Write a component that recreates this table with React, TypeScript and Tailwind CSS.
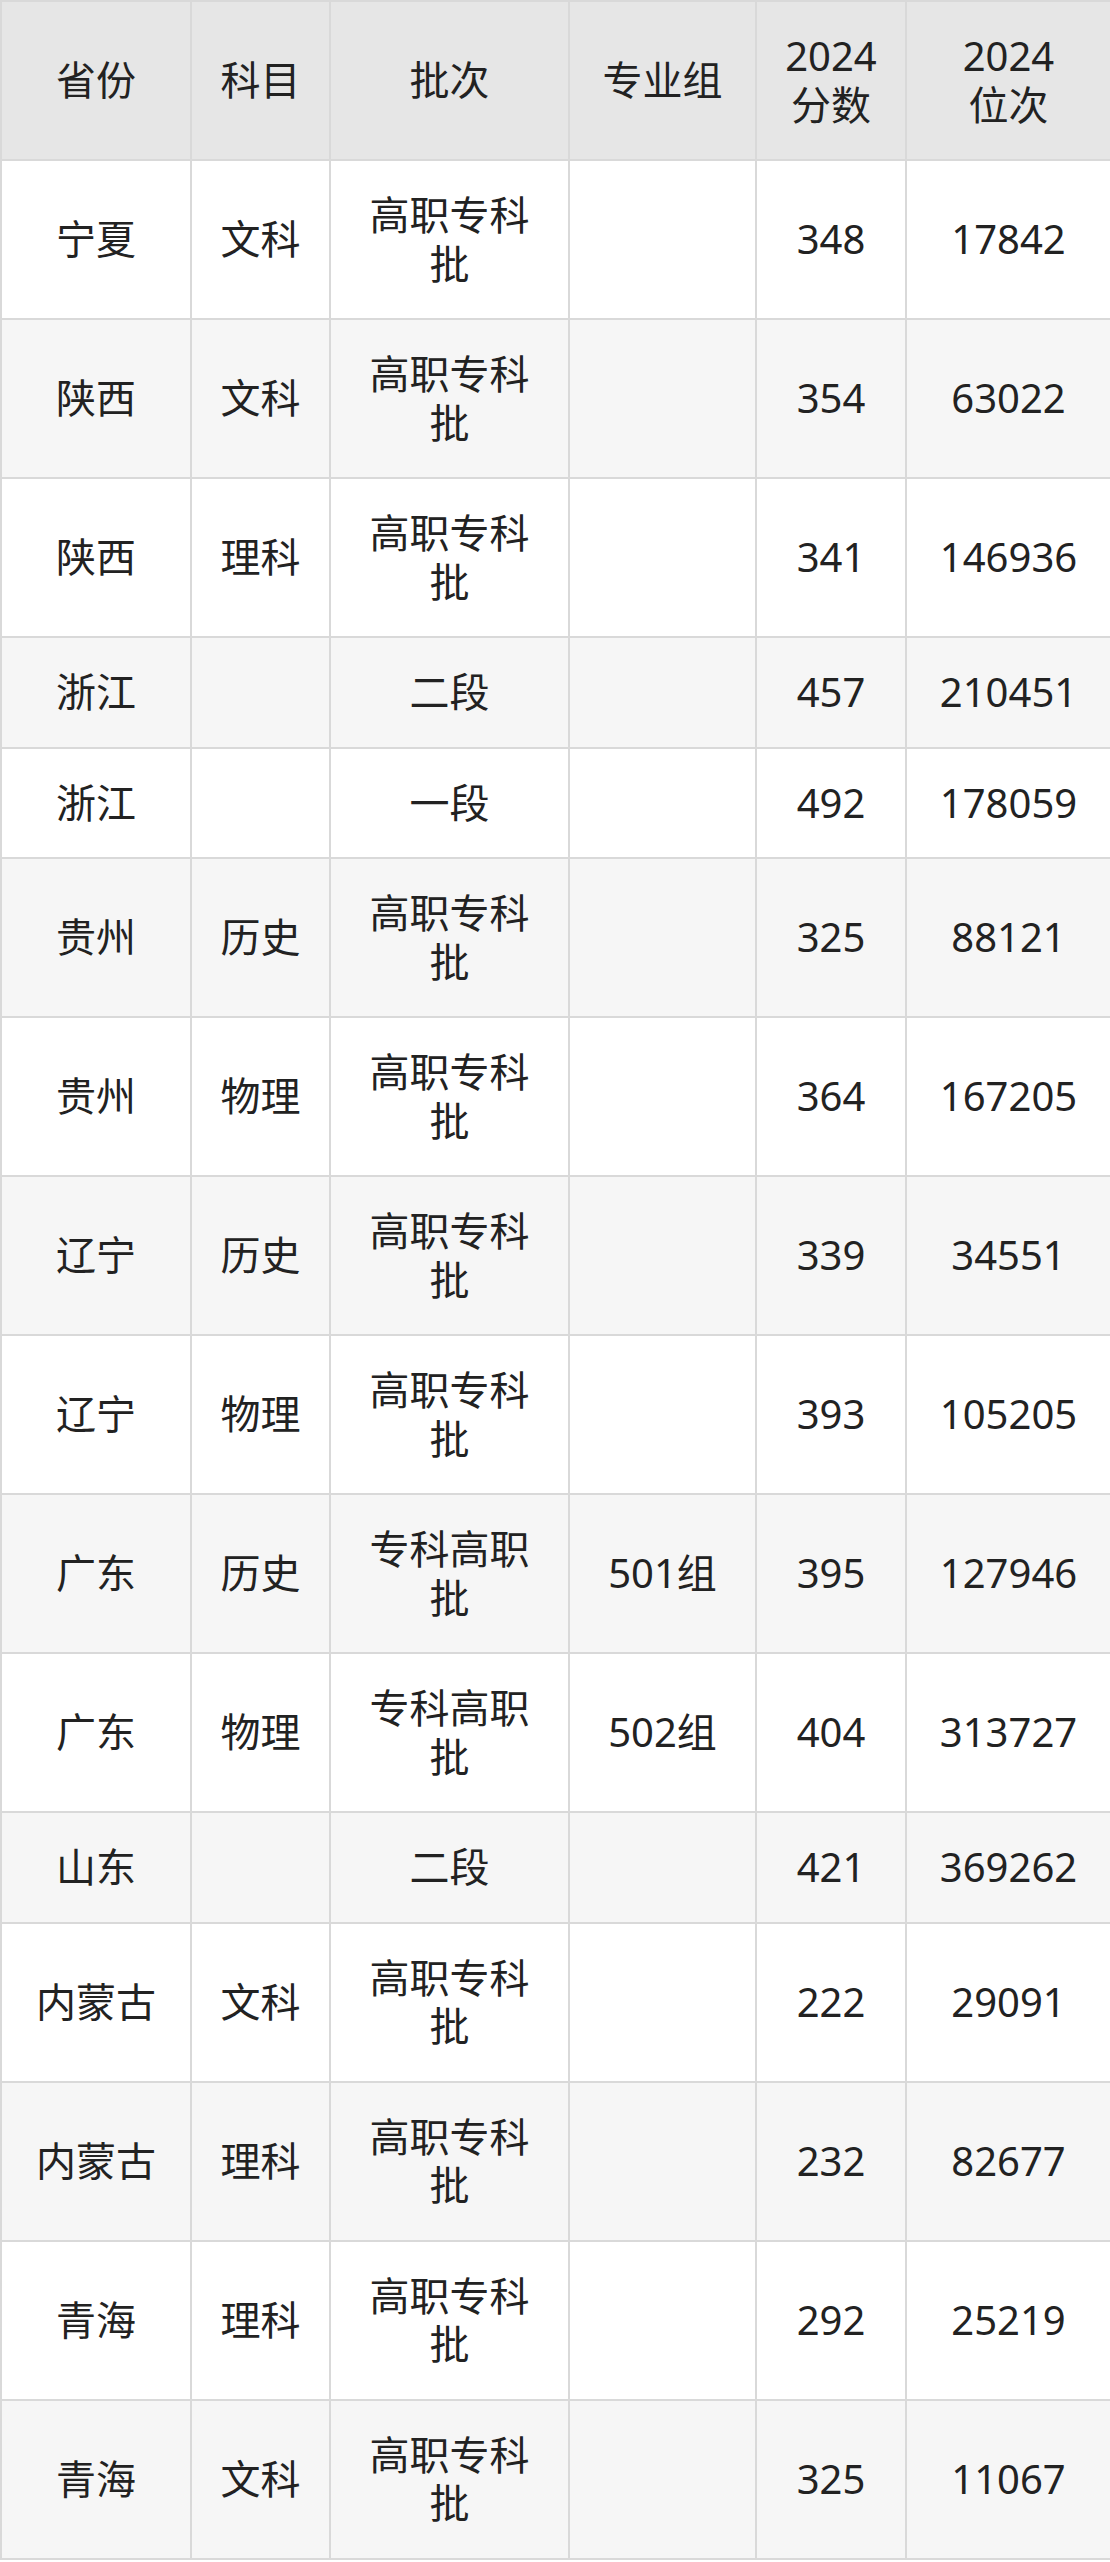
const rows: [string, string, string, string, string, string][] = [
  ["宁夏", "文科", "高职专科批", "", "348", "17842"],
  ["陕西", "文科", "高职专科批", "", "354", "63022"],
  ["陕西", "理科", "高职专科批", "", "341", "146936"],
  ["浙江", "", "二段", "", "457", "210451"],
  ["浙江", "", "一段", "", "492", "178059"],
  ["贵州", "历史", "高职专科批", "", "325", "88121"],
  ["贵州", "物理", "高职专科批", "", "364", "167205"],
  ["辽宁", "历史", "高职专科批", "", "339", "34551"],
  ["辽宁", "物理", "高职专科批", "", "393", "105205"],
  ["广东", "历史", "专科高职批", "501组", "395", "127946"],
  ["广东", "物理", "专科高职批", "502组", "404", "313727"],
  ["山东", "", "二段", "", "421", "369262"],
  ["内蒙古", "文科", "高职专科批", "", "222", "29091"],
  ["内蒙古", "理科", "高职专科批", "", "232", "82677"],
  ["青海", "理科", "高职专科批", "", "292", "25219"],
  ["青海", "文科", "高职专科批", "", "325", "11067"],
];

const headers = ["省份", "科目", "批次", "专业组", "2024分数", "2024位次"];

const cell = "border-2 border-[#d9d9d9] px-[22px] py-[30px] text-center align-middle";

export default function App() {
  return (
    <div className="w-[1110px] bg-white font-['Noto_Sans','Noto_Sans_CJK_SC',sans-serif] text-[40px] leading-[48.5px] text-[#222]">
      <table className="w-full table-fixed border-collapse">
        <colgroup>
          <col className="w-[190px]" />
          <col className="w-[139px]" />
          <col className="w-[239px]" />
          <col className="w-[187px]" />
          <col className="w-[150px]" />
          <col className="w-[205px]" />
        </colgroup>
        <thead>
          <tr className="bg-[#e6e6e6]">
            {headers.map((h) => (
              <th key={h} className={cell + " font-normal"}>
                {h.startsWith("2024") ? (
                  <>
                    2024
                    <br />
                    {h.slice(4)}
                  </>
                ) : (
                  h
                )}
              </th>
            ))}
          </tr>
        </thead>
        <tbody>
          {rows.map((r, i) => (
            <tr key={i} className={i % 2 === 0 ? "bg-white" : "bg-[#f6f6f6]"}>
              {r.map((c, j) => (
                <td key={j} className={cell}>
                  {c}
                </td>
              ))}
            </tr>
          ))}
        </tbody>
      </table>
    </div>
  );
}
